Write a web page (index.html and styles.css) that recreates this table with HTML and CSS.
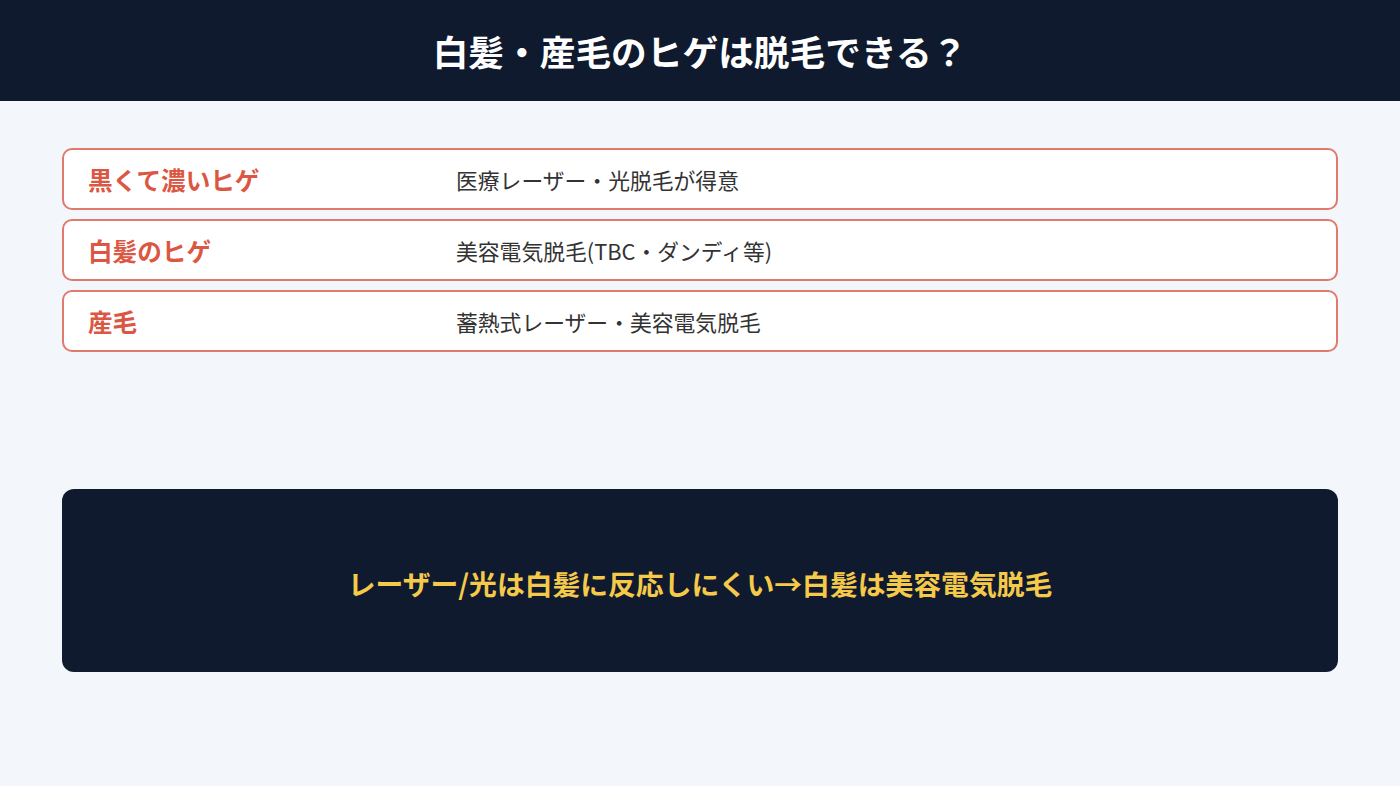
FILE: index.html
```html
<!DOCTYPE html>
<html lang="ja">
<head>
    <meta charset="UTF-8">
    <meta name="viewport" content="width=device-width, initial-scale=1.0">
    <title>白髪・産毛のヒゲは脱毛できる？</title>
    <link rel="stylesheet" href="styles.css">
</head>
<body>
    <header class="page-header">
        <h1>白髪・産毛のヒゲは脱毛できる？</h1>
    </header>

    <main class="content">
        <div class="rows">
            <div class="row">
                <div class="label">黒くて濃いヒゲ</div>
                <div class="value">医療レーザー・光脱毛が得意</div>
            </div>
            <div class="row">
                <div class="label">白髪のヒゲ</div>
                <div class="value">美容電気脱毛(TBC・ダンディ等)</div>
            </div>
            <div class="row">
                <div class="label">産毛</div>
                <div class="value">蓄熱式レーザー・美容電気脱毛</div>
            </div>
        </div>

        <div class="summary">
            <p>レーザー/光は白髪に反応しにくい→白髪は美容電気脱毛</p>
        </div>
    </main>
</body>
</html>
```

FILE: styles.css
```css
body {
    font-family: "Noto Sans CJK JP", "Noto Sans", sans-serif;
    margin: 0;
    padding: 0;
    background-color: #f3f6fb;
    height: 786px;
}

.page-header {
    background-color: #0f1a2e;
    height: 101px;
    display: flex;
    align-items: center;
    justify-content: center;
}

.page-header h1 {
    margin: 0;
    color: #fff;
    font-size: 35.7px;
    font-weight: 700;
    line-height: 1;
}

.content {
    padding: 47px 62px 0;
}

.rows {
    display: flex;
    flex-direction: column;
    gap: 9px;
}

.row {
    display: grid;
    grid-template-columns: 368px 1fr;
    align-items: center;
    height: 62px;
    box-sizing: border-box;
    padding: 0 24px;
    background-color: #fff;
    border: 2px solid #e07a6c;
    border-radius: 10px;
}

.label {
    color: #dc5743;
    font-size: 24.6px;
    font-weight: 700;
}

.value {
    color: #333;
    font-size: 21.8px;
}

.summary {
    margin-top: 137px;
    height: 183px;
    background-color: #0f1a2e;
    border-radius: 12px;
    display: flex;
    align-items: center;
    justify-content: center;
}

.summary p {
    margin: 0;
    padding-top: 4px;
    color: #f5c94a;
    font-size: 27.8px;
    font-weight: 700;
}
```
